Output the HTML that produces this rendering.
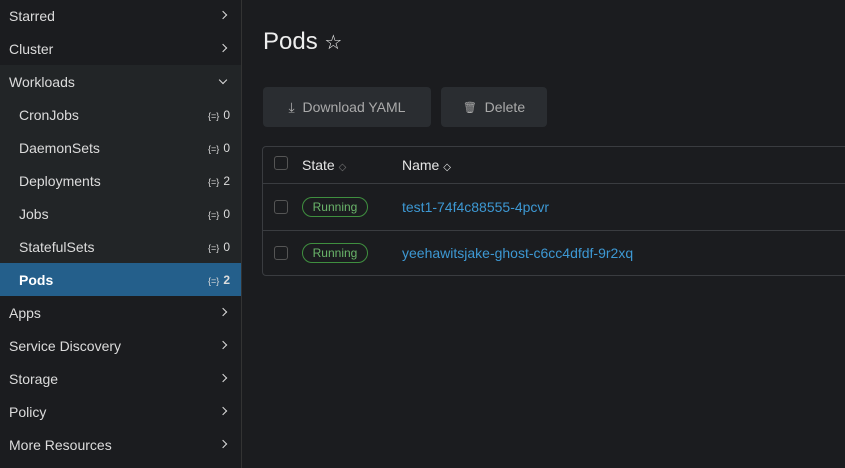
<!DOCTYPE html>
<html><head><style>
*{box-sizing:border-box;margin:0;padding:0}
body{width:845px;height:467px;background:#1b1c1f;font-family:"Liberation Sans",sans-serif;color:#e6e6e6;position:relative;overflow:hidden}
.side{position:absolute;left:0;top:-1px;width:242px;height:469px;background:#1b1c1f;border-right:1px solid #333;}
.it{height:33px;display:flex;align-items:center;padding-left:9px;font-size:14px;position:relative;color:#dcdcdc}
.it .ch{position:absolute;right:15px;top:13px;width:6px;height:6px;border-right:1.5px solid #ddd;border-top:1.5px solid #ddd;transform:rotate(45deg)}
.it .cd{position:absolute;right:15px;top:12px;width:6px;height:6px;border-right:1.5px solid #ddd;border-bottom:1.5px solid #ddd;transform:rotate(45deg)}
.grp{background:#222527}
.sub{padding-left:19px}
.cnt{position:absolute;right:11px;font-size:12px;color:#ddd}
.cnt b{font-weight:normal;font-size:9px;margin-right:4px}
.act{background:#245f8b;font-weight:bold;color:#fff}
h1{position:absolute;left:263px;top:28px;font-size:24px;font-weight:normal;color:#eee}
.btn{position:absolute;top:87px;height:40px;background:#2a2d31;border-radius:4px;color:#aaa;font-size:14px;display:flex;align-items:center;justify-content:center}
.tbl{position:absolute;left:262px;top:146px;width:600px;height:130px;border:1px solid #3a3c40;border-radius:4px}
.row{position:absolute;left:0;right:0;border-top:1px solid #3a3c40}
.cb{position:absolute;left:11px;width:14px;height:14px;border:1px solid #555;border-radius:3px}
.badge{position:absolute;left:39px;width:66px;height:20px;border:1px solid #3f8f3f;border-radius:10px;color:#6ab56a;font-size:12px;text-align:center;line-height:18px}
.lnk{position:absolute;left:139px;color:#3d98d3;font-size:14px}
</style></head><body>
<div class="side">
<div class="it">Starred<span class="ch"></span></div>
<div class="it">Cluster<span class="ch"></span></div>
<div class="grp">
<div class="it">Workloads<span class="cd"></span></div>
<div class="it sub">CronJobs<span class="cnt"><b>{=}</b>0</span></div>
<div class="it sub">DaemonSets<span class="cnt"><b>{=}</b>0</span></div>
<div class="it sub">Deployments<span class="cnt"><b>{=}</b>2</span></div>
<div class="it sub">Jobs<span class="cnt"><b>{=}</b>0</span></div>
<div class="it sub">StatefulSets<span class="cnt"><b>{=}</b>0</span></div>
<div class="it sub act">Pods<span class="cnt"><b>{=}</b>2</span></div>
</div>
<div class="it">Apps<span class="ch"></span></div>
<div class="it">Service Discovery<span class="ch"></span></div>
<div class="it">Storage<span class="ch"></span></div>
<div class="it">Policy<span class="ch"></span></div>
<div class="it">More Resources<span class="ch"></span></div>
</div>
<h1>Pods <span style="font-size:20px">☆</span></h1>
<div class="btn" style="left:263px;width:168px">⤓&nbsp;&nbsp;Download YAML</div>
<div class="btn" style="left:441px;width:106px"><span style="font-size:11px">🗑</span>&nbsp;&nbsp;Delete</div>
<div class="tbl">
<div class="cb" style="top:9px"></div>
<div style="position:absolute;left:39px;top:10px;font-size:14px">State <span style="color:#777;font-size:10px">◇</span></div>
<div style="position:absolute;left:139px;top:10px;font-size:14px">Name <span style="font-size:10px">◇</span></div>
<div class="row" style="top:36px;height:47px"><div class="cb" style="top:16px"></div><div class="badge" style="top:13px">Running</div><div class="lnk" style="top:15px">test1-74f4c88555-4pcvr</div></div>
<div class="row" style="top:83px;height:46px"><div class="cb" style="top:15px"></div><div class="badge" style="top:12px">Running</div><div class="lnk" style="top:14px">yeehawitsjake-ghost-c6cc4dfdf-9r2xq</div></div>
</div>
</body></html>
